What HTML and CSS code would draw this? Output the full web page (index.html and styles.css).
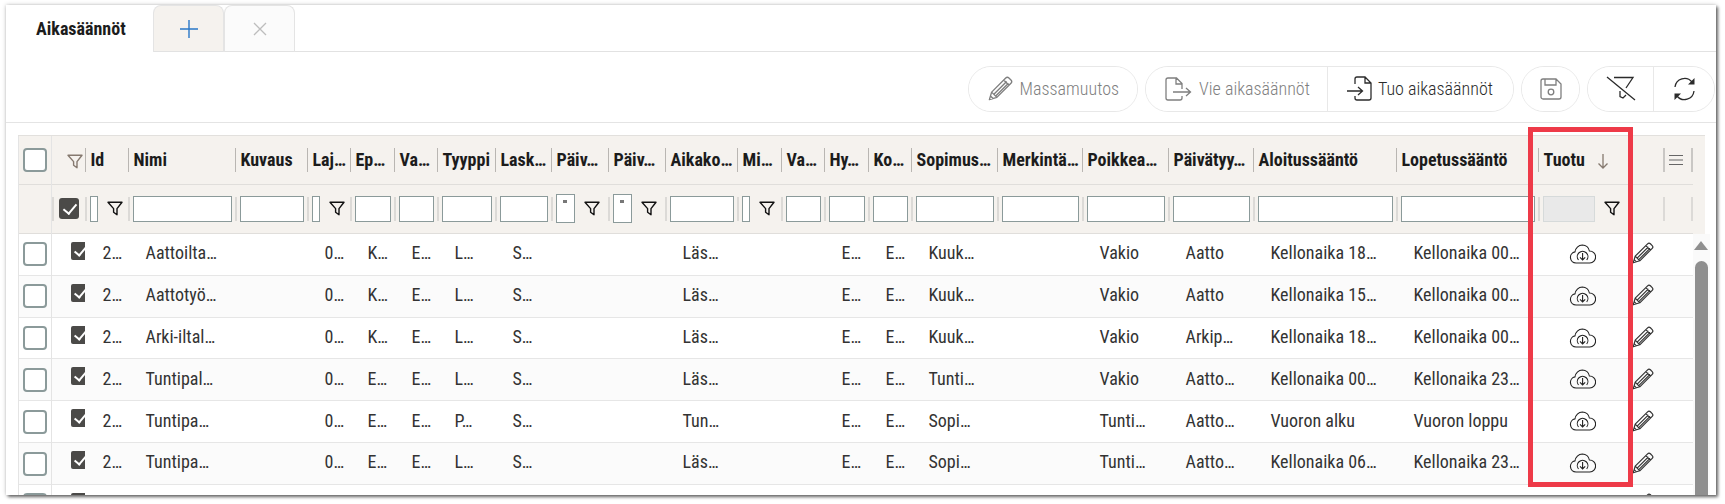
FILE: index.html
```html
<!DOCTYPE html>
<html lang="fi">
<head>
<meta charset="utf-8">
<title>Aikasäännöt</title>
<link rel="stylesheet" href="styles.css">
</head>
<body>
<svg class="defs" width="0" height="0" aria-hidden="true">
  <symbol id="funnel" viewBox="0 0 16 15"><path d="M1 1.200h14L10 7.600v6.200L6.600 11.200V7.600z" fill="none" stroke="currentColor" stroke-width="1.400" stroke-linejoin="round"/></symbol>
  <symbol id="cloud" viewBox="0 0 27 20"><path d="M7 19a5.600 5.600 0 0 1-1-11.100A7.600 7.600 0 0 1 13.400 1a7.200 7.200 0 0 1 7 6a6 6 0 0 1 .4 12z" fill="none" stroke="currentColor" stroke-width="1.100"/><path d="M9.500 16a5.300 5.300 0 1 1 8.200 0M13.600 9v7M11 13.400l2.600 2.600 2.600-2.600" fill="none" stroke="currentColor" stroke-width="1.100"/></symbol>
  <symbol id="pencil" viewBox="0 0 22 22"><path d="M1.200 20.800l2-6.600L15.600 1.800a2 2 0 0 1 2.800 0l1.800 1.800a2 2 0 0 1 0 2.800L7.800 18.800zM3.200 14.200l4.600 4.600M13.800 3.600l4.600 4.600M5.400 15.800L16.400 4.800M7 17.400L18 6.400M2.200 17.600l2.200 2.200" fill="none" stroke="currentColor" stroke-width="1.200" stroke-linejoin="round"/></symbol>
</svg>
<main class="card">
  <nav class="tabs">
    <div class="tab tab-active">Aikasäännöt</div>
    <div class="tab tab-add"><svg width="18" height="18" viewBox="0 0 18 18"><path d="M9 0v18M0 9h18" stroke="#2a78c8" stroke-width="1.400"/></svg></div>
    <div class="tab tab-close"><svg width="14" height="14" viewBox="0 0 14 14"><path d="M1 1l12 12M13 1L1 13" stroke="#bdbdbd" stroke-width="1.300"/></svg></div>
    <div class="tab-rest"></div>
  </nav>
  <div class="toolbar">
    <div class="group"><button class="btn off massa"><svg class="ic" width="25" height="25" viewBox="0 0 22 22"><use href="#pencil"/></svg>Massamuutos</button></div>
    <div class="group">
      <button class="btn off vie"><svg class="ic" width="27" height="24" viewBox="0 0 27 24"><path d="M17 12V6.500L11.500 1H3a2 2 0 0 0-2 2v18a2 2 0 0 0 2 2h12a2 2 0 0 0 2-2v-2M11 1v6h6M8 15h17M21 11l4.500 4-4.500 4" fill="none" stroke="currentColor" stroke-width="1.300"/></svg>Vie aikasäännöt</button>
      <button class="btn on tuo"><svg class="ic" width="26" height="25" viewBox="0 0 26 25"><path d="M8 8V3a2 2 0 0 1 2-2h8l6 6v15a2 2 0 0 1-2 2H10a2 2 0 0 1-2-2v-2M18 1v6h6M0 15h15M11 11l4.500 4-4.500 4" fill="none" stroke="currentColor" stroke-width="1.300"/></svg>Tuo aikasäännöt</button>
    </div>
    <div class="group"><button class="btn round off"><svg width="22" height="22" viewBox="0 0 22 22"><path d="M3 1h13l5 5v13a2 2 0 0 1-2 2H3a2 2 0 0 1-2-2V3a2 2 0 0 1 2-2zM5 1v6h11V1" fill="none" stroke="currentColor" stroke-width="1.300"/><circle cx="11" cy="14" r="2.800" fill="none" stroke="currentColor" stroke-width="1.300"/></svg></button></div>
    <div class="group">
      <button class="btn square on"><svg width="30" height="25" viewBox="0 0 30 25"><path d="M1 1l28 23M8 1.500h19L20 12M14 15v5.500l3 1.500 3-3" fill="none" stroke="currentColor" stroke-width="1.300"/></svg></button>
      <button class="btn square2 on"><svg width="23" height="24" viewBox="0 0 23 24"><path d="M2 10a9.600 9.600 0 0 1 17-5M21 14a9.600 9.600 0 0 1-17 5" fill="none" stroke="currentColor" stroke-width="1.300"/><path d="M21.500 1v6.500h-6.500zM1.500 23v-6.500h6.500z" fill="currentColor"/></svg></button>
    </div>
  </div>

  <div class="grid-head">
    <table class="t">
      <colgroup><col class="w33"><col class="w33"><col class="w43"><col class="w107"><col class="w72"><col class="w43"><col class="w44"><col class="w43"><col class="w58"><col class="w56"><col class="w57"><col class="w57"><col class="w72"><col class="w44"><col class="w43"><col class="w44"><col class="w43"><col class="w86"><col class="w85"><col class="w86"><col class="w85"><col class="w143"><col class="w142"><col class="w90"><col class="w35"><col class="w30"></colgroup>
      <tr class="hr">
        <th class="sel"><span class="box"></span></th>
        <th class="nosep"><svg class="fun-grey" width="16" height="15"><use href="#funnel"/></svg></th>
        <th>Id</th><th>Nimi</th><th>Kuvaus</th><th>Laj…</th><th>Ep…</th><th>Va…</th><th>Tyyppi</th><th>Lask…</th><th>Päiv…</th><th>Päiv…</th><th>Aikako…</th><th>Mi…</th><th>Va…</th><th>Hy…</th><th>Ko…</th><th>Sopimus…</th><th>Merkintä…</th><th>Poikkea…</th><th>Päivätyy…</th><th>Aloitussääntö</th><th>Lopetussääntö</th>
        <th>Tuotu <svg class="sort" width="12" height="16" viewBox="0 0 12 16"><path d="M6 1v14M1.500 10.500L6 15l4.500-4.500" fill="none" stroke="currentColor" stroke-width="1.300"/></svg></th>
        <th></th>
        <th class="endcol"><svg width="16" height="12" viewBox="0 0 16 12"><path d="M1 1.500h14M1 6h14M1 10.500h14" stroke="#666" stroke-width="1.200"/></svg></th>
      </tr>
      <tr class="fr">
        <td class="sel"></td>
        <td><div class="f"><span class="chk-big"></span></div></td>
        <td><div class="f"><input class="nar"><svg class="fun" width="16" height="15"><use href="#funnel"/></svg></div></td>
        <td><div class="f"><input></div></td>
        <td><div class="f"><input></div></td>
        <td><div class="f"><input class="nar"><svg class="fun" width="16" height="15"><use href="#funnel"/></svg></div></td>
        <td><div class="f"><input></div></td>
        <td><div class="f"><input></div></td>
        <td><div class="f"><input></div></td>
        <td><div class="f"><input></div></td>
        <td><div class="f"><span class="date"></span><svg class="fun" width="16" height="15"><use href="#funnel"/></svg></div></td>
        <td><div class="f"><span class="date"></span><svg class="fun" width="16" height="15"><use href="#funnel"/></svg></div></td>
        <td><div class="f"><input></div></td>
        <td><div class="f"><input class="nar"><svg class="fun" width="16" height="15"><use href="#funnel"/></svg></div></td>
        <td><div class="f"><input></div></td>
        <td><div class="f"><input></div></td>
        <td><div class="f"><input></div></td>
        <td><div class="f"><input></div></td>
        <td><div class="f"><input></div></td>
        <td><div class="f"><input></div></td>
        <td><div class="f"><input></div></td>
        <td><div class="f"><input></div></td>
        <td><div class="f"><input></div></td>
        <td><div class="f"><input class="dis" disabled><svg class="fun" width="16" height="15"><use href="#funnel"/></svg></div></td>
        <td><div class="f"></div></td>
        <td class="endcol"><div class="f"></div></td>
      </tr>
    </table>
  </div>

  <div class="grid-body">
    <table class="t body">
      <colgroup><col class="w33"><col class="w33"><col class="w43"><col class="w107"><col class="w72"><col class="w43"><col class="w44"><col class="w43"><col class="w58"><col class="w56"><col class="w57"><col class="w57"><col class="w72"><col class="w44"><col class="w43"><col class="w44"><col class="w43"><col class="w86"><col class="w85"><col class="w86"><col class="w85"><col class="w143"><col class="w142"><col class="w90"><col class="w35"><col class="w30"></colgroup>
      <tr><td class="sel"><span class="box"></span></td><td class="c"><span class="chk"></span></td><td>2…</td><td>Aattoilta…</td><td></td><td>0…</td><td>K…</td><td>E…</td><td>L…</td><td>S…</td><td></td><td></td><td>Läs…</td><td></td><td></td><td>E…</td><td>E…</td><td>Kuuk…</td><td></td><td>Vakio</td><td>Aatto</td><td>Kellonaika 18…</td><td>Kellonaika 00…</td><td class="mid"><svg width="27" height="20"><use href="#cloud"/></svg></td><td class="ed"><svg width="22" height="22"><use href="#pencil"/></svg></td><td></td></tr>
      <tr><td class="sel"><span class="box"></span></td><td class="c"><span class="chk"></span></td><td>2…</td><td>Aattotyö…</td><td></td><td>0…</td><td>K…</td><td>E…</td><td>L…</td><td>S…</td><td></td><td></td><td>Läs…</td><td></td><td></td><td>E…</td><td>E…</td><td>Kuuk…</td><td></td><td>Vakio</td><td>Aatto</td><td>Kellonaika 15…</td><td>Kellonaika 00…</td><td class="mid"><svg width="27" height="20"><use href="#cloud"/></svg></td><td class="ed"><svg width="22" height="22"><use href="#pencil"/></svg></td><td></td></tr>
      <tr><td class="sel"><span class="box"></span></td><td class="c"><span class="chk"></span></td><td>2…</td><td>Arki-iltal…</td><td></td><td>0…</td><td>K…</td><td>E…</td><td>L…</td><td>S…</td><td></td><td></td><td>Läs…</td><td></td><td></td><td>E…</td><td>E…</td><td>Kuuk…</td><td></td><td>Vakio</td><td>Arkip…</td><td>Kellonaika 18…</td><td>Kellonaika 00…</td><td class="mid"><svg width="27" height="20"><use href="#cloud"/></svg></td><td class="ed"><svg width="22" height="22"><use href="#pencil"/></svg></td><td></td></tr>
      <tr><td class="sel"><span class="box"></span></td><td class="c"><span class="chk"></span></td><td>2…</td><td>Tuntipal…</td><td></td><td>0…</td><td>E…</td><td>E…</td><td>L…</td><td>S…</td><td></td><td></td><td>Läs…</td><td></td><td></td><td>E…</td><td>E…</td><td>Tunti…</td><td></td><td>Vakio</td><td>Aatto…</td><td>Kellonaika 00…</td><td>Kellonaika 23…</td><td class="mid"><svg width="27" height="20"><use href="#cloud"/></svg></td><td class="ed"><svg width="22" height="22"><use href="#pencil"/></svg></td><td></td></tr>
      <tr><td class="sel"><span class="box"></span></td><td class="c"><span class="chk"></span></td><td>2…</td><td>Tuntipa…</td><td></td><td>0…</td><td>E…</td><td>E…</td><td>P…</td><td>S…</td><td></td><td></td><td>Tun…</td><td></td><td></td><td>E…</td><td>E…</td><td>Sopi…</td><td></td><td>Tunti…</td><td>Aatto…</td><td>Vuoron alku</td><td>Vuoron loppu</td><td class="mid"><svg width="27" height="20"><use href="#cloud"/></svg></td><td class="ed"><svg width="22" height="22"><use href="#pencil"/></svg></td><td></td></tr>
      <tr><td class="sel"><span class="box"></span></td><td class="c"><span class="chk"></span></td><td>2…</td><td>Tuntipa…</td><td></td><td>0…</td><td>E…</td><td>E…</td><td>L…</td><td>S…</td><td></td><td></td><td>Läs…</td><td></td><td></td><td>E…</td><td>E…</td><td>Sopi…</td><td></td><td>Tunti…</td><td>Aatto…</td><td>Kellonaika 06…</td><td>Kellonaika 23…</td><td class="mid"><svg width="27" height="20"><use href="#cloud"/></svg></td><td class="ed"><svg width="22" height="22"><use href="#pencil"/></svg></td><td></td></tr>
      <tr><td class="sel"><span class="box"></span></td><td class="c"><span class="chk"></span></td><td></td><td></td><td></td><td></td><td></td><td></td><td></td><td></td><td></td><td></td><td></td><td></td><td></td><td></td><td></td><td></td><td></td><td></td><td></td><td></td><td></td><td class="mid"></td><td class="ed"><svg width="22" height="22"><use href="#pencil"/></svg></td><td></td></tr>
    </table>
    <aside class="scroll"><span class="arrow"></span><span class="thumb"></span></aside>
  </div>
  <div class="marker"></div>
</main>
</body>
</html>
```

FILE: styles.css
```css
* { box-sizing: border-box; }
html, body { margin: 0; height: 504px; overflow: hidden; background: #fff; }
body { padding: 5px 9px 9px 6px; font-family: Roboto, "Liberation Sans Narrow", "Liberation Sans", sans-serif; font-stretch: 75%; font-size: 18px; color: #2b2b2b; }
.defs { position: absolute; }
.card { position: relative; height: 490px; overflow: hidden; background: #fff; }
body::before { content: ""; position: absolute; left: 6px; top: 5px; width: 1710px; height: 490px; box-shadow: 2px 2px 3px rgba(0,0,0,.55), 0 0 4px rgba(0,0,0,.25); }

.tabs { display: flex; height: 47px; }
.tab { display: flex; align-items: center; justify-content: center; border-radius: 8px 8px 0 0; }
.tab-active { width: 147px; justify-content: flex-start; padding: 0 0 0 30px; font-weight: 700; color: #1c1c1c; }
.tab-add { width: 71px; background: #f5f2ee; border: 1px solid #e4e4e4; padding-bottom: 1px; }
.tab-close { width: 71px; background: #fbfbfb; border: 1px solid #e4e4e4; padding-bottom: 1px; }
.tab-add, .tab-close, .tab-rest { border-bottom: 0; box-shadow: inset 0 -1px 0 #e2e2e2; }
.tab-rest { flex: 1; }

.toolbar { display: flex; justify-content: flex-end; align-items: center; gap: 7px; height: 71px; padding: 3px 1px 0 0; border-bottom: 1px solid #e4e4e4; }
.group { display: flex; height: 46px; border: 1px solid #e8e8e8; border-radius: 23px; overflow: hidden; }
.btn { display: flex; align-items: center; justify-content: center; gap: 7px; height: 100%; padding: 0 19px; border: 0; background: #fff; font: inherit; font-stretch: 75%; }
.btn + .btn { border-left: 1px solid #e8e8e8; }
.off { color: #7f7f7f; }
.on { color: #2b2b2b; }
.group > .off { font-weight: 300; }
.massa { padding: 0 18px 0 19px; }
.vie { padding: 0 17px 0 19px; }
.tuo { padding: 0 20px 0 19px; gap: 5px; font-weight: 300; }
.round { width: 57px; padding: 0; }
.square { width: 65px; padding: 0; }
.square2 { width: 61px; padding: 0; }

.grid-head { margin: 12px 4px 0 12px; width: 1687px; background: #f5f2ee; border-top: 1px solid #e2e0dd; }
.grid-body { display: flex; align-items: flex-start; margin-left: 12px; width: 1692px; height: 300px; }
.t { table-layout: fixed; border-collapse: collapse; width: 1674px; flex: none; }
.w30 { width: 30px; } .w33 { width: 33px; } .w35 { width: 35px; } .w43 { width: 43px; } .w44 { width: 44px; } .w56 { width: 56px; } .w57 { width: 57px; } .w58 { width: 58px; } .w72 { width: 72px; } .w85 { width: 85px; } .w86 { width: 86px; } .w90 { width: 90px; } .w107 { width: 107px; } .w142 { width: 142px; } .w143 { width: 143px; }

.t td, .t th { padding: 0; white-space: nowrap; overflow: hidden; }
.sel { border-left: 1px solid #e4e4e4; border-right: 1px solid #e4e4e4; text-align: center; }
.box { display: inline-block; vertical-align: middle; width: 24px; height: 24px; border: 2px solid #8b9a9a; border-radius: 4px; background: #fff; }

.hr { height: 48px; border-bottom: 1px solid #e0dedb; }
.hr th { text-align: left; font-weight: 700; color: #1c1c1c; padding-left: 6px; background: linear-gradient(#b9b6b2,#b9b6b2) left center / 1px 24px no-repeat; }
.hr th.sel { padding: 0; background: none; text-align: center; }
.hr th.nosep { background: none; padding-left: 15px; }
.hr th.endcol { padding-left: 5px; background: linear-gradient(#c9c7c4,#c9c7c4) left center / 2px 24px no-repeat, linear-gradient(#c9c7c4,#c9c7c4) right center / 2px 24px no-repeat; }
.fun-grey { color: #85796f; vertical-align: middle; }
.sort { color: #85796f; vertical-align: -3px; margin-left: 8px; }

.fr { height: 48px; border-bottom: 1px solid #e0dedb; }
.f { display: flex; align-items: center; height: 48px; padding: 0 3px 0 5px; background: linear-gradient(#dcdad7,#dcdad7) left center / 2px 24px no-repeat; }
.endcol .f { background: linear-gradient(#dcdad7,#dcdad7) left center / 2px 24px no-repeat, linear-gradient(#dcdad7,#dcdad7) right center / 2px 24px no-repeat; }
.f input { display: block; flex: 1; min-width: 0; width: 10px; height: 26px; padding: 0; border: 1px solid #8b9a9a; background: #fff; }
.f input.nar { flex: none; width: 8px; }
.f input.dis { flex: none; width: 52px; background: #e9e9e9; border-color: #d6dada; }
.fun { flex: none; margin-left: 9px; color: #111; }
.date { flex: none; display: block; width: 19px; height: 29px; border: 1px solid #8b9a9a; background: linear-gradient(#777,#777) 6px 5px / 4px 3px no-repeat, #fff; }
.chk-big { display: block; width: 20px; height: 21px; margin-left: 2px; border-radius: 3px; background: #4b4a48; position: relative; }
.chk-big::after { content: ""; position: absolute; left: 7px; top: 3px; width: 6px; height: 11px; border: solid #fff; border-width: 0 2.500px 2.500px 0; transform: rotate(40deg); }

.body tr { height: 41.800px; border-bottom: 1px solid #e6e6e6; }
.body tr:nth-child(even) { background: #fbfbfb; }
.body td { padding: 0 0 3px 18px; color: #333; }
.body td.sel { padding: 0 0 0 0; }
.body td.c { padding: 0 0 0 19px; vertical-align: top; }
.chk { display: block; width: 17px; height: 18px; margin-top: 8px; border-radius: 2px; background: #4b4a48; position: relative; }
.chk::after { content: ""; position: absolute; left: 6px; top: 2px; width: 5px; height: 10px; border: solid #fff; border-width: 0 2.500px 2.500px 0; transform: rotate(40deg); }
.body td.mid { padding: 0 0 3px 0; text-align: center; color: #222; }
.body td.mid svg, .body td.ed svg { display: inline-block; vertical-align: middle; }
.body td.ed { padding: 0 0 3px 4px; color: #333; }

.scroll { flex: 1; align-self: stretch; width: 18px; background: #fafafa; display: flex; flex-direction: column; align-items: center; padding: 7px 0 0 0; }
.arrow { width: 0; height: 0; border: 7px solid transparent; border-top: 0; border-bottom: 9px solid #8f8f8f; }
.thumb { width: 13px; height: 280px; margin-top: 11px; background: #8f8f8f; border-radius: 7px 7px 0 0; }

.marker { position: absolute; left: 1522px; top: 122px; width: 105px; height: 360px; border: 5px solid #ee3a48; }
```
